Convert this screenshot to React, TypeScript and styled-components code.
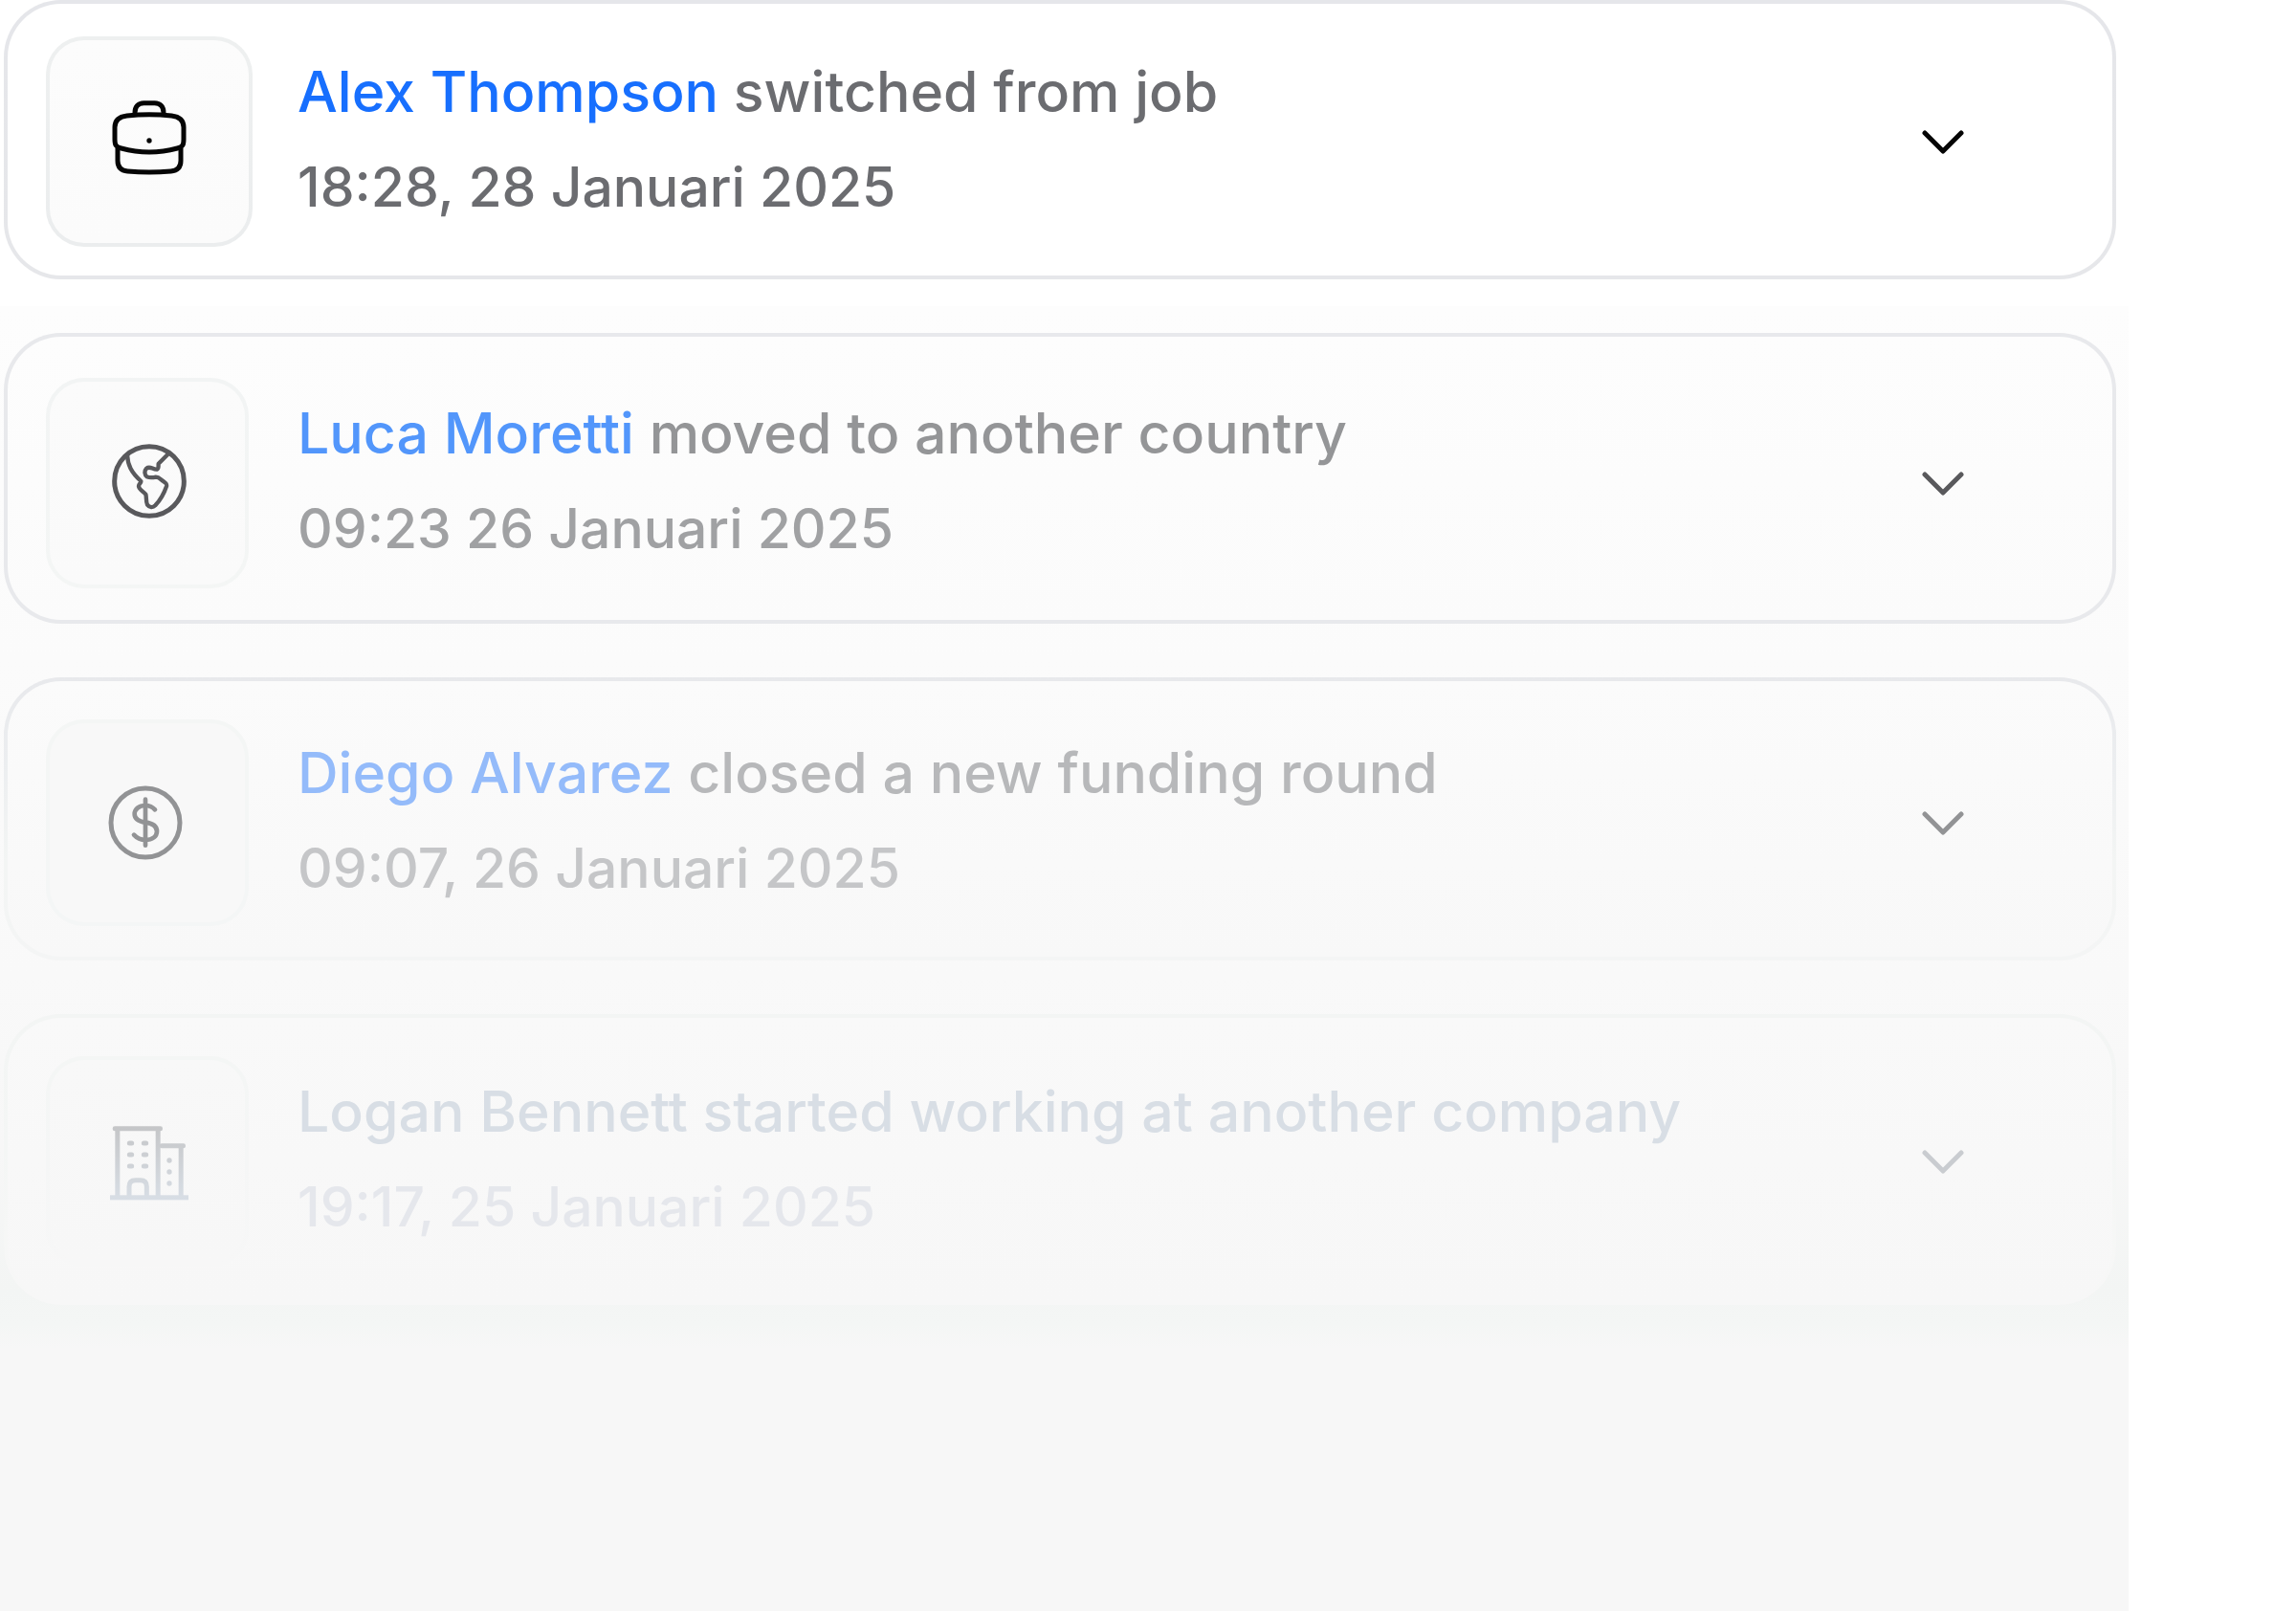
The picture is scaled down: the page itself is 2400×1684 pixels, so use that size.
import React from "react";
import styled, { createGlobalStyle } from "styled-components";

const GlobalStyle = createGlobalStyle`
  *, *::before, *::after { box-sizing: border-box; }
  body { margin: 0; background: #ffffff; }
`;

const Page = styled.main`
  min-height: 100vh;
  padding-right: 175px;
  display: grid;
  font-family: Inter, "Liberation Sans", sans-serif;
`;

const Feed = styled.ul`
  margin: 0;
  padding: 0 13px 0 4px;
  list-style: none;
  display: flex;
  flex-direction: column;
  gap: 56px;
  background: linear-gradient(
    #ffffff 0 320px,
    #fdfdfd 320px,
    #fbfbfb 690px,
    #f9f9f9 1020px,
    #f7f7f7 1200px,
    #f3f5f4 1350px,
    #f4f6f5 1384px,
    #f7f7f7 1410px
  );
`;

interface Tone {
  name: string;
  text: string;
  time: string;
  icon: string;
  chevron: string;
  fill: string;
  edge: string;
  tile: string;
  tileEdge: string;
}

const Card = styled.li<{ $tone: Tone; $top: number; $bottom: number }>`
  display: flex;
  align-items: center;
  padding: ${(p) => p.$top - 4}px 153px ${(p) => p.$bottom - 4}px 40px;
  border: 4px solid transparent;
  border-radius: 60px;
  background:
    linear-gradient(${(p) => p.$tone.fill}) padding-box,
    linear-gradient(${(p) => p.$tone.edge}) border-box;
`;

const Tile = styled.div<{ $tone: Tone; $width: number; $height: number }>`
  flex: none;
  display: grid;
  place-items: center;
  width: ${(p) => p.$width}px;
  height: ${(p) => p.$height}px;
  border: 4px solid transparent;
  border-radius: 40px;
  color: ${(p) => p.$tone.icon};
  background:
    linear-gradient(${(p) => p.$tone.tile}) padding-box,
    linear-gradient(${(p) => p.$tone.tileEdge}) border-box;
`;

const Slot = styled.div`
  flex: none;
  width: 263px;
`;

const Icon = styled.svg`
  display: block;
  width: 84px;
  height: 84px;
  overflow: visible;
  fill: none;
  stroke: currentColor;
  stroke-width: 15;
  stroke-linecap: round;
  stroke-linejoin: round;
`;

const Copy = styled.div`
  flex: 1;
  min-width: 0;
  padding-bottom: 5px;
  font-weight: 500;
  line-height: 100px;
`;

const Headline = styled.p<{ $color: string }>`
  margin: 0;
  font-size: 59px;
  white-space: nowrap;
  color: ${(p) => p.$color};
`;

const Time = styled.time<{ $color: string }>`
  display: block;
  font-size: 57px;
  white-space: nowrap;
  color: ${(p) => p.$color};
`;

const Name = styled.span<{ $color: string }>`
  color: ${(p) => p.$color};
`;

const Toggle = styled.button<{ $color: string }>`
  flex: none;
  display: grid;
  place-items: center;
  width: 48px;
  height: 48px;
  padding: 0;
  border: 0;
  background: none;
  color: ${(p) => p.$color};
  cursor: pointer;
`;

const Chevron = styled.svg`
  width: 48px;
  height: 48px;
  fill: none;
  stroke: currentColor;
  stroke-width: 5;
  stroke-linecap: round;
  stroke-linejoin: round;
`;

const Briefcase = () => (
  <Icon viewBox="342 318 252 252" aria-hidden="true">
    <path d="M423 358v-5c0-18 10-30 28-30h34c18 0 28 12 28 30v5" />
    <path d="M398 363q70-8 140 0c24 3 38 14 38 36v38c0 20-5 24-20 28q-88 24-176 0c-15-4-20-8-20-28v-38c0-22 14-33 38-36z" />
    <path d="M369 466v38c0 20 10 31 31 33q68 6 136 0c21-2 31-13 31-33v-38" />
    <circle cx="468" cy="441" r="8" fill="currentColor" stroke="none" />
  </Icon>
);

const Globe = () => (
  <Icon viewBox="336 252 252 252" aria-hidden="true">
    <circle cx="468" cy="372" r="109" />
    <path
      strokeWidth="13"
      d="M399 290c2 32 12 54 43 82c1 5-7 9-7 15c0 10 10 14 22 26c3 10 0 22 5 33c7 9 17 10 25 2c15-16 27-36 35-60c2-8-2-10-9-15c-10-7-14-14-24-14c-10 2-20 3-28-1c-8-5-9-18-2-26c12-9 20 4 33 3c7-3 4-10 5-18l32-32"
    />
  </Icon>
);

const Dollar = () => (
  <Icon viewBox="336 234 252 252" aria-hidden="true">
    <circle cx="456" cy="360" r="108" />
    <path strokeWidth="14" d="M456 287v144" />
    <path
      strokeWidth="14"
      d="M486 319c-8-9-18-13-30-13c-21 0-34 12-34 27c0 17 13 23 34 26c22 3 36 10 36 28c0 16-14 27-36 27c-15 0-27-6-36-16"
    />
  </Icon>
);

const Offices = () => (
  <Icon viewBox="336 366 252 252" aria-hidden="true">
    <defs>
      <linearGradient id="offices-fade" gradientUnits="userSpaceOnUse" x1="0" y1="385" x2="0" y2="610">
        <stop offset="0" stopColor="#c5c6c8" />
        <stop offset="1" stopColor="#d8dee5" />
      </linearGradient>
    </defs>
    <g fill="url(#offices-fade)" stroke="none">
      <rect x="345" y="598" width="246" height="15" />
      <rect x="353" y="382" width="157" height="15" rx="7" />
      <rect x="361" y="390" width="15" height="210" />
      <rect x="488" y="390" width="15" height="210" />
      <rect x="500" y="436" width="82" height="15" rx="7" />
      <rect x="560" y="444" width="15" height="156" />
      <circle cx="531" cy="489" r="8" />
      <circle cx="531" cy="525" r="8" />
      <circle cx="531" cy="561" r="8" />
    </g>
    <g stroke="url(#offices-fade)">
      <path d="M405 600V571c0-13 7-20 20-20h15c13 0 20 7 20 20v29" />
      <path
        strokeWidth="15"
        d="M406 435h7M451 435h7M406 471h7M451 471h7M406 507h7M451 507h7M406 435v0.010"
      />
    </g>
  </Icon>
);

const events = [
  {
    name: "Alex Thompson",
    action: "switched from job",
    time: "18:28, 28 Januari 2025",
    Glyph: Briefcase,
    pad: [38, 34],
    tile: [216, 220],
    tone: {
      name: "#176ffe",
      text: "#6b6c70",
      time: "#6b6c70",
      icon: "#050505",
      chevron: "#050505",
      fill: "#ffffff, #ffffff",
      edge: "#e5e6ea, #e6e7ea",
      tile: "#fcfcfc, #fbfbfb",
      tileEdge: "#eef0f0, #ebedee",
    },
  },
  {
    name: "Luca Moretti",
    action: "moved to another country",
    time: "09:23 26 Januari 2025",
    Glyph: Globe,
    pad: [47, 37],
    tile: [212, 220],
    tone: {
      name: "#5296fb",
      text: "#949597",
      time: "#a0a1a3",
      icon: "#59595c",
      chevron: "#59595c",
      fill: "#fdfdfd, #fbfbfb",
      edge: "#e8e9ec, #e8e9ec",
      tile: "#fbfbfb, #fafafa",
      tileEdge: "#f2f4f4, #f4f6f5",
    },
  },
  {
    name: "Diego Alvarez",
    action: "closed a new funding round",
    time: "09:07, 26 Januari 2025",
    Glyph: Dollar,
    pad: [44, 36],
    tile: [212, 216],
    tone: {
      name: "#94bbfa",
      text: "#b7b8ba",
      time: "#c5c6c8",
      icon: "#929395",
      chevron: "#929395",
      fill: "#fbfbfb, #f8f8f8",
      edge: "#e8e9ec, #eceef0 30%, #f3f5f4 65%, #f4f5f5",
      tile: "#f8f8f8, #f8f8f8",
      tileEdge: "#f4f6f5, #f4f6f6",
    },
  },
  {
    name: "Logan Bennett",
    action: "started working at another company",
    time: "19:17, 25 Januari 2025",
    Glyph: Offices,
    pad: [44, 40],
    tile: [212, 220],
    tone: {
      name: "#d8dee5",
      text: "#d8dee5",
      time: "#e5e7ec",
      icon: "#ccd0d5",
      chevron: "#c9ccd0",
      fill: "#f9f9f9, #f7f7f7",
      edge: "#f3f5f4, #f4f6f5 45%, #f6f7f6 75%, #f7f7f7",
      tile: "#f8f8f8, #f7f7f7",
      tileEdge: "#f4f6f5, #f5f6f6 50%, #f7f7f7",
    },
  },
];

export default function App() {
  return (
    <>
      <GlobalStyle />
      <Page>
        <Feed>
          {events.map(({ name, action, time, Glyph, pad, tile, tone }) => (
            <Card key={name} $tone={tone} $top={pad[0]} $bottom={pad[1]}>
              <Slot>
                <Tile $tone={tone} $width={tile[0]} $height={tile[1]}>
                  <Glyph />
                </Tile>
              </Slot>
              <Copy>
                <Headline $color={tone.text}>
                  <Name $color={tone.name}>{name}</Name> {action}
                </Headline>
                <Time $color={tone.time}>{time}</Time>
              </Copy>
              <Toggle type="button" aria-label={`Show details for ${name}`} $color={tone.chevron}>
                <Chevron viewBox="0 0 48 48" aria-hidden="true">
                  <path d="M5 15l19 19 19-19" />
                </Chevron>
              </Toggle>
            </Card>
          ))}
        </Feed>
      </Page>
    </>
  );
}
